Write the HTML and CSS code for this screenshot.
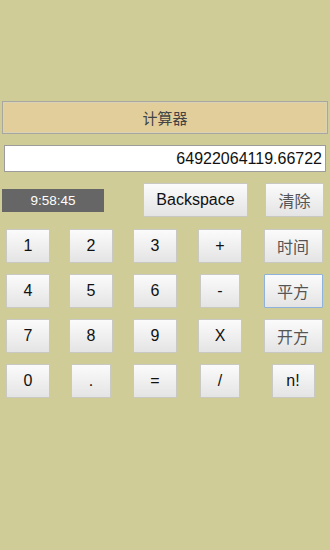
FILE: index.html
```html
<!DOCTYPE html>
<html>
<head>
    <meta charset="utf-8">
    <link rel="stylesheet" href="styles.css">
</head>
<body>
    <div class="calc">
        <div class="title">计算器</div>
        <div class="display">64922064119.66722</div>

        <!-- clock and edit keys -->
        <div class="top_row">
            <div class="clock">9:58:45</div>
            <button class="key back">Backspace</button>
            <button class="key cn">清除</button>
        </div>

        <!-- keypad -->
        <div class="pad">
            <button class="key">1</button>
            <button class="key">2</button>
            <button class="key">3</button>
            <button class="key">+</button>
            <button class="key cn">时间</button>

            <button class="key">4</button>
            <button class="key">5</button>
            <button class="key">6</button>
            <button class="key narrow">-</button>
            <button class="key cn focus">平方</button>

            <button class="key">7</button>
            <button class="key">8</button>
            <button class="key">9</button>
            <button class="key">X</button>
            <button class="key cn">开方</button>

            <button class="key">0</button>
            <button class="key narrow">.</button>
            <button class="key">=</button>
            <button class="key narrow">/</button>
            <button class="key fact">n!</button>
        </div>
    </div>
</body>
</html>
```
FILE: styles.css
```css
body {
    margin: 0;
    background-color: #cfcc98;
    font-family: 'Liberation Sans', Arial, sans-serif;
    color: #111;
}

.calc {
    padding-top: 101px;
}

.title {
    margin: 0 2px;
    height: 31px;
    line-height: 31px;
    border: 1px solid #a8a6a0;
    box-shadow: inset 0 0 0 1px #d9d2b4;
    background-color: #e2ce9b;
    text-align: center;
    font-family: 'Noto Sans CJK SC', sans-serif;
    font-size: 15px;
    color: #444;
}

.display {
    margin: 11px 4px 0;
    height: 25px;
    line-height: 26px;
    border: 1px solid #9c9c9c;
    background-color: #fff;
    text-align: right;
    padding-right: 3px;
    font-size: 16px;
}

.top_row {
    display: flex;
    align-items: center;
    margin-top: 11px;
    padding-left: 2px;
}

.clock {
    width: 102px;
    height: 23px;
    line-height: 23px;
    background-color: #666;
    color: #fff;
    text-align: center;
    font-size: 13.5px;
}

/* buttons */
.key {
    width: 44px;
    height: 34px;
    padding: 0;
    border: 1px solid #c9c9c4;
    border-radius: 1px;
    background: linear-gradient(#fbfbfb, #e4e4e4);
    font-family: 'Liberation Sans', Arial, sans-serif;
    font-size: 16px;
    color: #111;
}

.back {
    width: 105px;
    margin-left: 39px;
}

.top_row .cn {
    margin-left: 17px;
}

.cn {
    width: 59px;
    font-family: 'Noto Sans CJK SC', sans-serif;
    font-size: 16px;
    color: #555;
}

.focus {
    border-color: #8fb2dc;
}

.narrow {
    width: 40px;
}

.fact {
    width: 43px;
}

.pad {
    display: grid;
    grid-template-columns: 56px 70px 58px 72px 74px;
    row-gap: 11px;
    justify-items: center;
    margin-top: 12px;
}
```
